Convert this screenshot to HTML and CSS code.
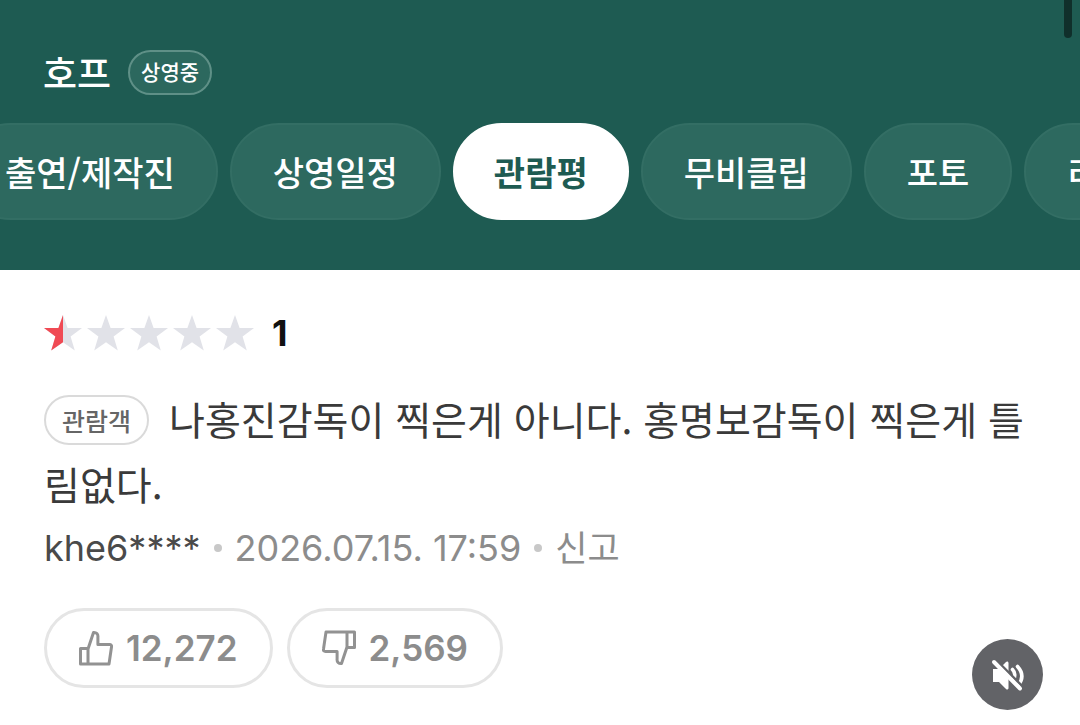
FILE: index.html
```html
<!DOCTYPE html>
<html lang="ko">
<head>
    <meta charset="UTF-8">
    <meta name="viewport" content="width=device-width, initial-scale=1.0">
    <title>호프 관람평</title>
    <link rel="stylesheet" href="styles.css">
</head>
<body>

<header class="header">
    <div class="title-row">
        <h1 class="title">호프</h1>
        <span class="status">상영중</span>
    </div>
    <nav class="tabs">
        <a class="tab" href="#">출연/제작진</a>
        <a class="tab" href="#">상영일정</a>
        <a class="tab active" href="#" aria-current="page">관람평</a>
        <a class="tab" href="#">무비클립</a>
        <a class="tab" href="#">포토</a>
        <a class="tab" href="#">리뷰</a>
    </nav>
    <div class="scrollbar"></div>
</header>

<main class="review">
    <div class="rating">
        <svg class="stars" width="211" height="36" viewBox="0 0 211 36" aria-hidden="true">
            <defs>
                <path id="star" d="M19 0l4.6 13H38L26.600 21.500 30.800 35.500 19 27.200 7.200 35.500 11.400 21.500 0 13h14.400z"/>
                <clipPath id="half"><rect width="19" height="36"/></clipPath>
            </defs>
            <g fill="#e1e2e8">
                <use href="#star"/>
                <use href="#star" x="43"/>
                <use href="#star" x="86"/>
                <use href="#star" x="129"/>
                <use href="#star" x="172"/>
            </g>
            <use href="#star" fill="#f04a54" clip-path="url(#half)"/>
        </svg>
        <strong class="score">1</strong>
    </div>

    <p class="comment"><span class="viewer">관람객</span>나홍진감독이 찍은게 아니다. 홍명보감독이 찍은게 틀림없다.</p>

    <div class="meta">
        <span class="user">khe6****</span>
        <span class="dot"></span>
        <time datetime="2026-07-15T17:59">2026.07.15. 17:59</time>
        <span class="dot"></span>
        <a class="report" href="#">신고</a>
    </div>

    <div class="votes">
        <button class="vote" type="button" aria-label="공감 12,272">
            <svg width="34" height="36" viewBox="0 0 34 36" fill="none" stroke="#929292" stroke-width="3" stroke-linejoin="round">
                <path d="M1.500 18.500H9v15.500H1.500zM9 19l5.500-16.500c3-.2 4.700 1.500 4.400 4.500v7.500h11.600c1.600 0 2.300.8 2 2.500L30 34H9"/>
            </svg>
            12,272
        </button>
        <button class="vote" type="button" aria-label="비공감 2,569">
            <svg width="34" height="36" viewBox="0 0 34 36" fill="none" stroke="#929292" stroke-width="3" stroke-linejoin="round">
                <path d="M25 2h7.500v15.500H25zM25 17l-5.500 16.500c-3 .2-4.700-1.500-4.400-4.500v-7.500H3.500c-1.600 0-2.300-.8-2-2.500L4 2h21"/>
            </svg>
            2,569
        </button>
    </div>
</main>

<button class="mute" type="button" aria-label="소리 켜기">
    <svg width="34" height="34" viewBox="0 0 34 34">
        <path d="M2 11h6l7-7c1-1 2.500-.5 2.500 1v25c0 1.500-1.500 2-2.500 1l-7-7H2z" fill="#fff"/>
        <path d="M21.500 11.500c2.500 2.500 3 7 1 10M26.500 8.500c5.500 6 5.500 12.500 1 18.500" fill="none" stroke="#fff" stroke-width="3.600" stroke-linecap="round"/>
        <path d="M5 2l27 27" stroke="#626367" stroke-width="2.500"/>
        <path d="M3 4l26 26.500" stroke="#fff" stroke-width="4" stroke-linecap="round"/>
    </svg>
</button>

</body>
</html>
```
FILE: styles.css
```css
* {
    box-sizing: border-box;
}

body {
    margin: 0;
    background-color: #fff;
    font-family: "Noto Sans CJK KR", sans-serif;
    color: #3a3a3a;
    overflow: hidden;
}

a {
    color: inherit;
    text-decoration: none;
}

.header {
    position: relative;
    padding: 50px 0;
    background-color: #1e5b52;
    color: #fff;
    overflow: hidden;
}

.title-row {
    display: flex;
    align-items: center;
    gap: 17px;
    padding: 0 43px;
}

.title {
    margin: 0;
    font-size: 37px;
    line-height: 45px;
    font-weight: 500;
}

.status {
    padding: 0 11px 2px;
    border: 2px solid #5f9087;
    border-radius: 23px;
    background-color: #2c685e;
    font-size: 21px;
    line-height: 39px;
    font-weight: 500;
}

.tabs {
    display: flex;
    gap: 12px;
    margin: 28px 0 0 -38px;
}

.tab {
    flex: none;
    padding: 0 41px;
    border: 2px solid #336e64;
    border-radius: 49px;
    background-color: #2d695f;
    font-size: 34px;
    line-height: 93px;
    font-weight: 500;
}

.tab.active {
    padding: 0 39px;
    border-color: #fff;
    background-color: #fff;
    color: #1e5b52;
    font-weight: 700;
}

.scrollbar {
    position: absolute;
    top: 0;
    right: 8px;
    width: 8px;
    height: 38px;
    border-radius: 0 0 4px 4px;
    background-color: #102f2b;
}

.review {
    padding: 39px 44px;
}

.rating {
    display: flex;
    align-items: center;
    gap: 17px;
    height: 48px;
}

.score {
    font-family: Inter, sans-serif;
    font-size: 36px;
    color: #111;
}

.comment {
    margin: 29px 0 0;
    font-size: 39px;
    line-height: 65px;
    font-weight: 400;
    word-break: break-all;
}

.viewer {
    display: inline-block;
    margin-right: 20px;
    padding: 0 16px;
    border: 2px solid #dadada;
    border-radius: 25px;
    font-size: 25px;
    line-height: 46px;
    font-weight: 500;
    color: #666;
    vertical-align: 4px;
}

.meta {
    display: flex;
    align-items: center;
    gap: 13px;
    margin-top: 8px;
    font-family: Inter, "Noto Sans CJK KR", sans-serif;
    font-size: 36px;
    line-height: 48px;
    font-weight: 400;
    color: #8c8c8c;
}

.user {
    color: #4a4a4a;
}

.dot {
    width: 8px;
    height: 8px;
    border-radius: 50%;
    background-color: #c8c8c8;
}

.report {
    font-size: 35px;
}

.votes {
    display: flex;
    gap: 14px;
    margin-top: 36px;
}

.vote {
    display: flex;
    align-items: center;
    gap: 13px;
    height: 80px;
    padding: 0 32px;
    border: 3px solid #e5e5e5;
    border-radius: 40px;
    background-color: #fff;
    font-family: Inter, sans-serif;
    font-size: 35px;
    font-weight: 600;
    color: #8c8c8c;
}

.mute {
    position: fixed;
    right: 37px;
    bottom: 15px;
    display: flex;
    align-items: center;
    justify-content: center;
    width: 71px;
    height: 71px;
    padding: 0;
    border: none;
    border-radius: 50%;
    background-color: #626367;
}
```
